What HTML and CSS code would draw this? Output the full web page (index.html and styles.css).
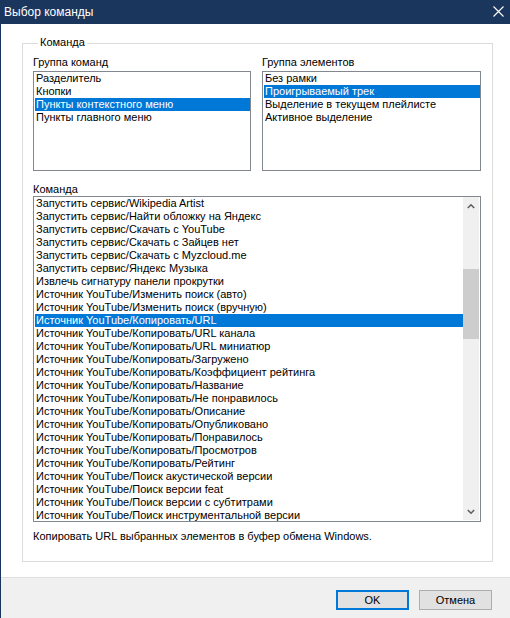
FILE: index.html
```html
<!DOCTYPE html>
<html lang="ru">
<head>
    <meta charset="UTF-8">
    <title>Выбор команды</title>
    <link rel="stylesheet" href="styles.css">
</head>
<body>
    <div class="window">
        <div class="titlebar">
            <span class="title">Выбор команды</span>
            <svg class="close" width="11" height="11" viewBox="0 0 11 11">
                <path d="M0.5 0.5 L10.5 10.5 M10.5 0.5 L0.5 10.5" stroke="#ffffff" stroke-width="1.1" fill="none"/>
            </svg>
        </div>

        <div class="content">
            <div class="group">
                <div class="group-title">Команда</div>

                <div class="top-row">
                    <div class="column left">
                        <div class="label">Группа команд</div>
                        <ul class="list">
                            <li>Разделитель</li>
                            <li>Кнопки</li>
                            <li class="selected">Пункты контекстного меню</li>
                            <li>Пункты главного меню</li>
                        </ul>
                    </div>
                    <div class="column right">
                        <div class="label">Группа элементов</div>
                        <ul class="list">
                            <li>Без рамки</li>
                            <li class="selected">Проигрываемый трек</li>
                            <li>Выделение в текущем плейлисте</li>
                            <li>Активное выделение</li>
                        </ul>
                    </div>
                </div>

                <div class="label command-label">Команда</div>
                <div class="list commands">
                    <ul>
                        <li>Запустить сервис/Wikipedia Artist</li>
                        <li>Запустить сервис/Найти обложку на Яндекс</li>
                        <li>Запустить сервис/Скачать с YouTube</li>
                        <li>Запустить сервис/Скачать с Зайцев нет</li>
                        <li>Запустить сервис/Скачать с Myzcloud.me</li>
                        <li>Запустить сервис/Яндекс Музыка</li>
                        <li>Извлечь сигнатуру панели прокрутки</li>
                        <li>Источник YouTube/Изменить поиск (авто)</li>
                        <li>Источник YouTube/Изменить поиск (вручную)</li>
                        <li class="selected">Источник YouTube/Копировать/URL</li>
                        <li>Источник YouTube/Копировать/URL канала</li>
                        <li>Источник YouTube/Копировать/URL миниатюр</li>
                        <li>Источник YouTube/Копировать/Загружено</li>
                        <li>Источник YouTube/Копировать/Коэффициент рейтинга</li>
                        <li>Источник YouTube/Копировать/Название</li>
                        <li>Источник YouTube/Копировать/Не понравилось</li>
                        <li>Источник YouTube/Копировать/Описание</li>
                        <li>Источник YouTube/Копировать/Опубликовано</li>
                        <li>Источник YouTube/Копировать/Понравилось</li>
                        <li>Источник YouTube/Копировать/Просмотров</li>
                        <li>Источник YouTube/Копировать/Рейтинг</li>
                        <li>Источник YouTube/Поиск акустической версии</li>
                        <li>Источник YouTube/Поиск версии feat</li>
                        <li>Источник YouTube/Поиск версии с субтитрами</li>
                        <li>Источник YouTube/Поиск инструментальной версии</li>
                    </ul>
                    <div class="scrollbar">
                        <div class="arrow">
                            <svg width="8" height="6" viewBox="0 0 8 6">
                                <path d="M0.8 5 L4 1.8 L7.2 5" stroke="#606060" stroke-width="1.6" fill="none"/>
                            </svg>
                        </div>
                        <div class="track">
                            <div class="thumb"></div>
                        </div>
                        <div class="arrow">
                            <svg width="8" height="6" viewBox="0 0 8 6">
                                <path d="M0.8 1 L4 4.2 L7.2 1" stroke="#606060" stroke-width="1.6" fill="none"/>
                            </svg>
                        </div>
                    </div>
                </div>

                <div class="description">Копировать URL выбранных элементов в буфер обмена Windows.</div>
            </div>
        </div>

        <div class="footer">
            <button class="btn default">OK</button>
            <button class="btn">Отмена</button>
        </div>
    </div>
</body>
</html>
```

FILE: styles.css
```css
body {
    margin: 0;
    font-family: "Liberation Sans", Arial, sans-serif;
    font-size: 11px;
    line-height: 13px;
    color: #000000;
}

.window {
    width: 510px;
    height: 618px;
    display: flex;
    flex-direction: column;
    border-left: 1px solid #1b365d;
    box-sizing: border-box;
    background-color: #ffffff;
}

.titlebar {
    height: 24px;
    flex-shrink: 0;
    display: flex;
    justify-content: space-between;
    align-items: center;
    padding: 0 6px 0 3px;
    background-color: #1b365d;
    color: #ffffff;
}

.title {
    font-size: 12px;
}

.close {
    display: block;
    margin-top: -1px;
}

.content {
    flex: 1;
    padding: 19px 17px 0 21px;
}

.group {
    border: 1px solid #dcdcdc;
    padding: 0 11px 18px 10px;
}

/* caption sits on top of the frame line */
.group-title {
    width: fit-content;
    margin: -8px 0 0 5px;
    padding: 0 2px;
    height: 13px;
    background-color: #ffffff;
}

.top-row {
    display: flex;
    gap: 11px;
    margin-top: 7px;
}

.column.left {
    width: 218px;
}

.column.right {
    width: 219px;
}

.column .label {
    margin-bottom: 2px;
}

.list {
    list-style: none;
    margin: 0;
    padding: 0 0 0 1px;
    border: 1px solid #828790;
    box-sizing: border-box;
    height: 100px;
    overflow: hidden;
}

.list ul {
    list-style: none;
    margin: 0;
    padding: 0;
}

.list li {
    height: 13px;
    padding-left: 1px;
    white-space: nowrap;
    overflow: hidden;
}

.list li.selected {
    background-color: #0078d7;
    color: #ffffff;
}

.command-label {
    margin-top: 12px;
}

.list.commands {
    display: flex;
    height: 326px;
    padding-right: 1px;
}

.commands ul {
    flex: 1;
    min-width: 0;
}

.scrollbar {
    width: 16px;
    flex-shrink: 0;
    display: flex;
    flex-direction: column;
    margin-bottom: 1px;
    background-color: #f0f0f0;
}

.arrow {
    height: 17px;
    display: flex;
    justify-content: center;
    align-items: center;
}

.arrow svg {
    display: block;
}

.track {
    flex: 1;
}

.thumb {
    height: 70px;
    margin-top: 55px;
    background-color: #cdcdcd;
}

.description {
    margin-top: 8px;
}

.footer {
    height: 41px;
    flex-shrink: 0;
    box-sizing: border-box;
    border-top: 1px solid #dfdfdf;
    background-color: #f0f0f0;
    display: flex;
    justify-content: flex-end;
    align-items: flex-start;
    gap: 10px;
    padding: 12px 18px 0 0;
}

.btn {
    width: 73px;
    height: 20px;
    margin: 0;
    padding: 0;
    font-family: inherit;
    font-size: 11px;
    color: #000000;
    background-color: #e1e1e1;
    border: 1px solid #adadad;
    box-sizing: border-box;
}

.btn.default {
    border: 2px solid #0078d7;
}
```
